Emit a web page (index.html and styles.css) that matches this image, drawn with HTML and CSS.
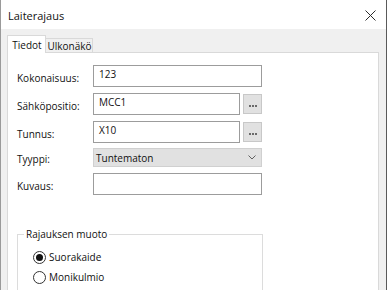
FILE: index.html
```
<!DOCTYPE html>
<html lang="fi">
<head>
<meta charset="utf-8">
<title>Laiterajaus</title>
<link rel="stylesheet" href="styles.css">
</head>
<body>
<div class="window">
  <div class="titlebar">
    <span class="title">Laiterajaus</span>
    <svg class="close" width="11" height="11" viewBox="0 0 11 11"><path d="M0.5 0.5 L10.5 10.5 M10.5 0.5 L0.5 10.5" stroke="#2b2b2b" stroke-width="1" fill="none"/></svg>
  </div>
  <div class="client">
    <div class="tabs">
      <div class="tab active">Tiedot</div>
      <div class="tab">Ulkonäkö</div>
    </div>
    <div class="panel">
      <div class="form">
        <div class="row r1">
          <div class="label">Kokonaisuus:</div>
          <div class="field"><div class="input wide">123</div></div>
        </div>
        <div class="row r2">
          <div class="label">Sähköpositio:</div>
          <div class="field"><div class="input narrow">MCC1</div><div class="btn"><span class="dots"></span></div></div>
        </div>
        <div class="row r3">
          <div class="label">Tunnus:</div>
          <div class="field"><div class="input narrow">X10</div><div class="btn"><span class="dots"></span></div></div>
        </div>
        <div class="row r4">
          <div class="label">Tyyppi:</div>
          <div class="field"><div class="select"><span>Tuntematon</span><svg class="chev" width="8" height="5" viewBox="0 0 8 5"><path d="M0.5 0.5 L4 4 L7.5 0.5" stroke="#606060" stroke-width="1" fill="none"/></svg></div></div>
        </div>
        <div class="row r5">
          <div class="label">Kuvaus:</div>
          <div class="field"><div class="input wide"></div></div>
        </div>
      </div>
      <fieldset class="group">
        <legend>Rajauksen muoto</legend>
        <div class="radio"><span class="circle checked"></span><span>Suorakaide</span></div>
        <div class="radio"><span class="circle"></span><span>Monikulmio</span></div>
      </fieldset>
    </div>
  </div>
</div>
</body>
</html>
```
FILE: styles.css
```
html, body {
  margin: 0;
  padding: 0;
  height: 290px;
  overflow: hidden;
  background: #ffffff;
}
body {
  font-family: "Open Sans", "Noto Sans", sans-serif;
  font-size: 10px;
  color: #111;
}
.window {
  width: 387px;
  height: 320px;
  box-sizing: border-box;
  border-left: 1px solid #9a9a9a;
  border-right: 1px solid #5a5a5a;
  display: flex;
  flex-direction: column;
}
.titlebar {
  height: 29px;
  flex: none;
  background: #fff;
  display: flex;
  align-items: center;
  justify-content: space-between;
  padding: 1px 10px 0 7px;
  box-sizing: border-box;
  font-size: 11px;
}
.close { display: block; }
.client {
  flex: 1;
  background: #f0f0f0;
  padding: 6px 7px 0 6px;
  display: flex;
  flex-direction: column;
}
.tabs {
  height: 17px;
  display: flex;
  align-items: flex-end;
  flex: none;
}
.tab {
  box-sizing: border-box;
  text-align: center;
  border: 1px solid #d9d9d9;
  border-bottom: none;
  line-height: 13px;
  white-space: nowrap;
}
.tab.active {
  width: 39px;
  height: 18px;
  background: #fff;
  margin-bottom: -1px;
  position: relative;
  z-index: 1;
  padding-top: 3px;
  padding-left: 1px;
}
.tab:not(.active) {
  width: 47px;
  height: 14px;
  background: #f0f0f0;
  border-left: none;
  padding-top: 1px;
  padding-left: 1px;
}
.panel {
  flex: 1;
  background: #fff;
  border: 1px solid #d9d9d9;
  padding: 12px 0 0 9px;
}
.form {
  display: flex;
  flex-direction: column;
}
.row {
  display: flex;
  align-items: center;
}
.r1, .r2 { margin-bottom: 6px; }
.r3 { margin-bottom: 5px; }
.r4 { margin-bottom: 6px; }
.label {
  width: 76px;
  padding-top: 3px;
}
.field {
  width: 169px;
  display: flex;
  align-items: center;
  gap: 3px;
}
.input {
  height: 22px;
  box-sizing: border-box;
  border: 1px solid #9c9c9c;
  padding: 0 5px;
  line-height: 17px;
}
.wide { width: 169px; }
.narrow { width: 147px; }
.btn {
  width: 19px;
  height: 20px;
  box-sizing: border-box;
  background: #e1e1e1;
  border: 1px solid #c8c8c8;
  display: flex;
  justify-content: center;
  align-items: flex-end;
  padding-bottom: 6px;
}
.dots {
  width: 8px;
  height: 2px;
  background: repeating-linear-gradient(90deg, #6a6a6a 0 2px, transparent 2px 3px);
}
.row.r2, .row.r3 { height: 22px; }
.select {
  width: 169px;
  height: 19px;
  box-sizing: border-box;
  background: #e1e1e1;
  border: 1px solid #d0d0d0;
  display: flex;
  align-items: center;
  justify-content: space-between;
  padding: 0 5px 0 2px;
}
.chev { display: block; }
.group {
  margin: 31px 0 0 0;
  width: 246px;
  box-sizing: border-box;
  border: 1px solid #dcdcdc;
  padding: 0 6px 10px 6px;
}
.group legend {
  padding: 0 2px;
  line-height: 16px;
}
.radio {
  display: flex;
  align-items: center;
  height: 20px;
  padding-left: 9px;
  gap: 3px;
}
.radio:first-of-type { margin-top: 5px; }
.circle {
  width: 13px;
  height: 13px;
  box-sizing: border-box;
  border: 1px solid #333;
  border-radius: 50%;
  background: #fff;
  display: flex;
  align-items: center;
  justify-content: center;
}
.circle.checked::after {
  content: "";
  width: 7px;
  height: 7px;
  border-radius: 50%;
  background: #111;
}
```
